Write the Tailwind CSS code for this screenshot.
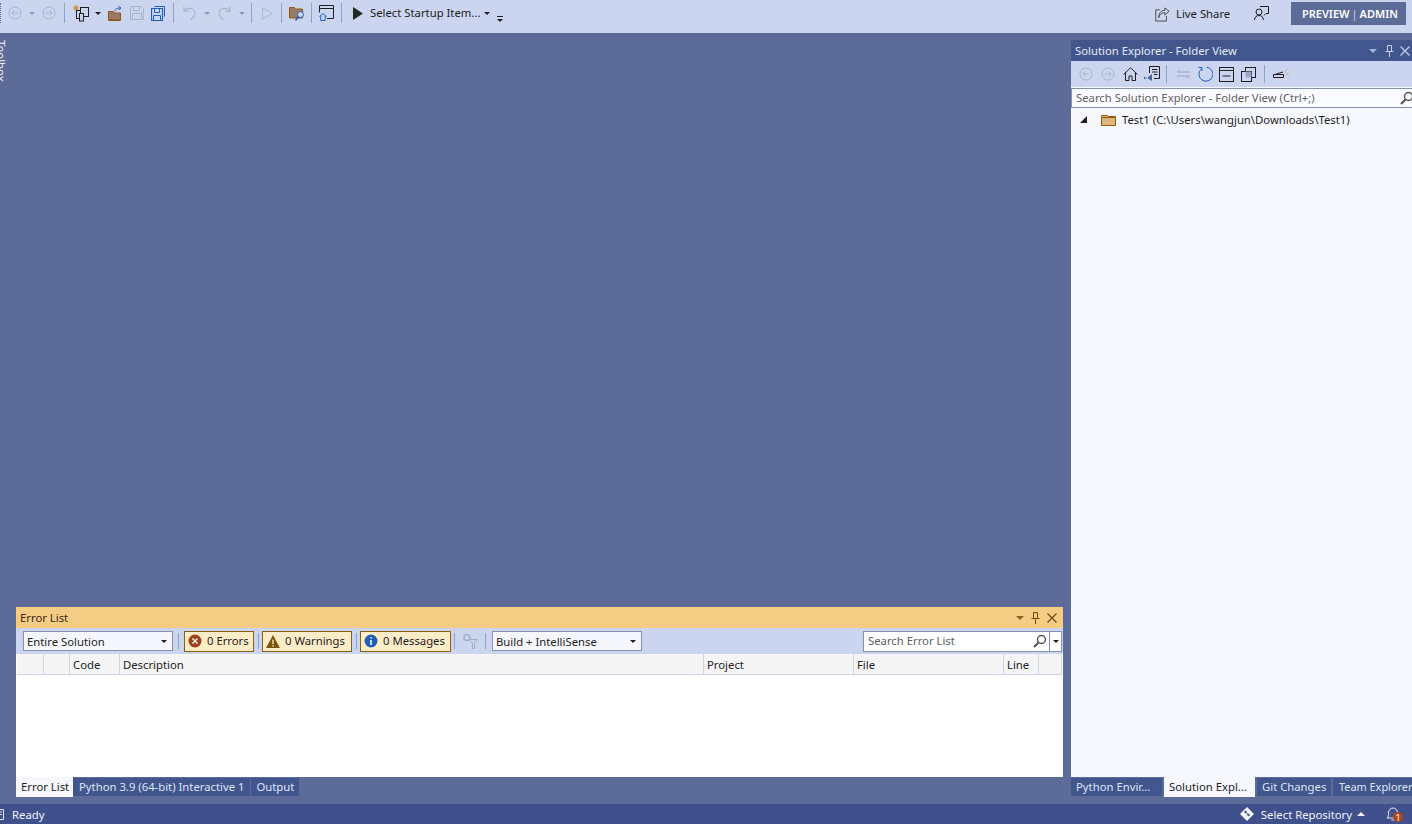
<!DOCTYPE html>
<html lang="en">
<head>
    <meta charset="UTF-8">
    <title>Visual Studio</title>
    <script src="https://cdn.jsdelivr.net/npm/@tailwindcss/browser@4"></script>
</head>
<body class="h-screen w-screen overflow-hidden flex flex-col bg-[#5d6b99] text-[11.3px] leading-none text-[#1e1e1e] font-['Noto_Sans','Open_Sans',sans-serif]">

    <!-- top toolbar -->
    <header class="h-[33px] shrink-0 flex items-center bg-[#ccd5f0]">
        <div class="w-[6px] h-[20px] shrink-0 mb-[7px] border-l border-dotted border-[#5d6b99]"></div>
        <div class="w-[18px] flex justify-center mb-[7px]"><svg width="14" height="14" viewBox="0 0 14 14" fill="none" stroke="#a9b4cc"><circle cx="7" cy="7" r="6"/><path d="M10.5 7H4M6.5 4.2 3.800 7l2.700 2.800"/></svg></div>
        <div class="w-[16px] flex justify-center mb-[7px]"><div class="border-x-[3px] border-x-transparent border-t-[3px] border-t-[#8d97b3]"></div></div>
        <div class="w-[18px] flex justify-center mb-[7px]"><svg width="14" height="14" viewBox="0 0 14 14" fill="none" stroke="#a9b4cc"><circle cx="7" cy="7" r="6"/><path d="M3.500 7H10M7.500 4.200 10.200 7l-2.700 2.800"/></svg></div>
        <div class="w-[12px] flex justify-center mb-[7px]"><div class="w-px h-[20px] bg-[#8fa5c8]"></div></div>
        <div class="w-[22px] flex justify-center mb-[7px]"><svg width="17" height="18" viewBox="0 0 17 18" fill="none"><path d="M3 1v6M0 4h6M1 2l4 4M5 2 1 6" stroke="#c98a1e"/><rect x="3.500" y="6.500" width="7" height="8" stroke="#1e1e1e"/><rect x="7.500" y="3.500" width="8" height="9" fill="#ccd5f0" stroke="#1e1e1e"/><rect x="6.500" y="9.500" width="4" height="7.500" fill="#ccd5f0" stroke="#1e1e1e"/></svg></div>
        <div class="w-[12px] flex justify-center mb-[7px]"><div class="border-x-[3px] border-x-transparent border-t-[3px] border-t-[#1e1e1e]"></div></div>
        <div class="w-[22px] flex justify-center mb-[7px]"><svg width="15" height="15" viewBox="0 0 15 15" fill="none"><path d="M.5 5.500h5l1 1.500h6v7H.5z" fill="#9b7b66" stroke="#8f5a10"/><path d="M.5 14.500h12" stroke="#8f5a10" stroke-width="1.500"/><path d="M7 5c0-2 2-3 5-3M10.500 0 13 2l-2.500 2" stroke="#1f5fb8"/></svg></div>
        <div class="w-[21px] flex justify-center mb-[7px]"><svg width="14" height="14" viewBox="0 0 14 14" fill="none" stroke="#a9b4cc"><path d="M.5.500h11l2 2v11H.5z"/><path d="M3.500.500v4h6v-4M2.500 13.500v-6h9v6"/></svg></div>
        <div class="w-[22px] flex justify-center mb-[7px]"><svg width="14" height="15" viewBox="0 0 14 15" fill="none" stroke="#1f5fb8"><path d="M3.500.500h10v10"/><path d="M.5 2.500h11v12H.5z" stroke-width="1.200"/><path d="M3.500 2.500v4h5v-4M2.500 14.500v-5h7v5"/></svg></div>
        <div class="w-[8px] flex justify-center mb-[7px]"><div class="w-px h-[20px] bg-[#8fa5c8]"></div></div>
        <div class="w-[24px] flex justify-center mb-[7px]"><svg width="13" height="15" viewBox="0 0 13 15" fill="none" stroke="#a9b4cc" stroke-width="1.200"><path d="M1 .500v5h5M1 5.500C3 3 5 2 8 2.500c3 .8 4.500 3.500 3.500 6.500-.5 2-2 3.500-4 5"/></svg></div>
        <div class="w-[12px] flex justify-center mb-[7px]"><div class="border-x-[3px] border-x-transparent border-t-[3px] border-t-[#8d97b3]"></div></div>
        <div class="w-[22px] flex justify-center mb-[7px]"><svg width="13" height="15" viewBox="0 0 13 15" fill="none" stroke="#a9b4cc" stroke-width="1.200"><path d="M12 .500v5H7M12 5.500C10 3 8 2 5 2.500 2 3.300.5 6 1.500 9c.5 2 2 3.500 4 5"/></svg></div>
        <div class="w-[14px] flex justify-center mb-[7px]"><div class="border-x-[3px] border-x-transparent border-t-[3px] border-t-[#8d97b3]"></div></div>
        <div class="w-[4px] flex justify-center mb-[7px]"><div class="w-px h-[20px] bg-[#8fa5c8]"></div></div>
        <div class="w-[28px] flex justify-center mb-[7px] -mr-[2px]"><svg width="11" height="13" viewBox="0 0 11 13" fill="none" stroke="#a9b4cc"><path d="M.5.800 10 6.500.5 12.200z"/></svg></div>
        <div class="w-[4px] flex justify-center mb-[7px]"><div class="w-px h-[20px] bg-[#8fa5c8]"></div></div>
        <div class="w-[26px] pl-[2px] flex justify-center mb-[7px]"><svg width="16" height="15" viewBox="0 0 16 15" fill="none"><path d="M.5 1.500h5l1 1.500h7v9H.5z" fill="#9b7b66" stroke="#8f5a10"/><circle cx="11.500" cy="8.500" r="3" fill="#ccd5f0" stroke="#1f5fb8"/><path d="M9.500 10.500 6.500 14.500" stroke="#1f5fb8" stroke-width="1.500"/></svg></div>
        <div class="w-[4px] flex justify-center mb-[7px]"><div class="w-px h-[20px] bg-[#8fa5c8]"></div></div>
        <div class="w-[26px] flex justify-center mb-[7px]"><svg width="15" height="16" viewBox="0 0 15 16" fill="none"><path d="M8 13.500H14.500V.500H.5v7M.5 3.500h14" stroke="#1e1e1e"/><path d="M.5 11.500 4 8.500l3.500 3M1.800 11v4.500h4.400V11" stroke="#1f5fb8" fill="#ccd5f0"/></svg></div>
        <div class="w-[4px] flex justify-center mb-[7px]"><div class="w-px h-[20px] bg-[#8fa5c8]"></div></div>
        <div class="w-[27px] flex justify-end pr-[7px] mb-[7px]"><svg width="10" height="13" viewBox="0 0 10 13"><path d="M0 0 10 6.500 0 13z" fill="#1e2b22"/></svg></div>
        <span class="w-[108px] whitespace-nowrap mb-[7px]">Select Startup Item...</span>
        <div class="w-[18px] flex justify-center mb-[7px]"><div class="border-x-[3px] border-x-transparent border-t-[3px] border-t-[#1e1e1e]"></div></div>
        <div class="w-[8px] flex flex-col items-center gap-[2px] mt-[4px]"><div class="w-[6px] h-px bg-[#1e1e1e]"></div><div class="border-x-[3px] border-x-transparent border-t-[3px] border-t-[#1e1e1e]"></div></div>

        <div class="ml-auto flex items-center pr-[6px] mb-[7px]">
            <svg class="mt-[3px]" width="15" height="15" viewBox="0 0 16 15" fill="none" stroke="#444"><path d="M5 2.500H.8v12h11.400V9"/><path d="M4 11c.5-3.500 3-5.500 6.500-5.500V8L15 4 10.500.5V3C6 3 4 6.500 4 11z"/></svg>
            <span class="ml-[6px] w-[78px] whitespace-nowrap pt-[2px]">Live Share</span>
            <svg width="15" height="15" viewBox="0 0 15 15" fill="none" stroke="#1e1e1e"><path d="M6 .5h8.500v7H12L10 9.500"/><circle cx="5" cy="6" r="3"/><path d="M.5 14c.3-3 2-4.500 4.500-4.500s4.200 1.500 4.500 4.500"/></svg>
            <div class="ml-[22px] w-[115px] h-[23px] pl-[3px] bg-[#5d6b99] flex items-center justify-center text-white text-[11px] font-semibold whitespace-nowrap">PREVIEW<span class="mx-[2px] font-normal text-[#ccd5f0]">|</span>ADMIN</div>
        </div>
    </header>

    <div class="flex-1 min-h-0 flex">
        <!-- toolbox strip -->
        <div class="w-[16px] shrink-0 overflow-hidden pt-[7px]">
            <div class="text-white/90 whitespace-nowrap origin-top-left rotate-90 translate-x-[7px] h-[14px]">Toolbox</div>
        </div>

        <!-- document well + error list -->
        <div class="w-[1047px] shrink-0 flex flex-col">
            <div class="flex-1"></div>
            <section class="h-[170px] flex flex-col bg-white">
                <div class="h-[21px] shrink-0 flex items-center bg-[#f5cc84] pl-[4px] pr-[6px] text-[#3b2a12]">
                    <span>Error List</span>
                    <div class="ml-auto flex items-center gap-[7px]">
                        <div class="border-x-[4px] border-x-transparent border-t-[4px] border-t-[#8a6420]"></div>
                        <svg width="9" height="12" viewBox="0 0 9 12" fill="none" stroke="#6b4d14"><path d="M2.500.5h4v6h-4zM.5 6.500h8M4.500 6.500V12"/></svg>
                        <svg width="10" height="10" viewBox="0 0 10 10" stroke="#6b4d14" stroke-width="1.200"><path d="m.5.500 9 9M9.500.500l-9 9"/></svg>
                    </div>
                </div>
                <div class="h-[26px] shrink-0 flex items-center bg-[#ccd5f0] pl-[7px]">
                    <div class="w-[150px] h-[20px] flex items-center justify-between px-[3px] bg-[#f5f7fd] border border-[#8591b3]"><span class="pt-[1px]">Entire Solution</span><div class="mr-[2px] border-x-[3px] border-x-transparent border-t-[3px] border-t-[#1e1e1e]"></div></div>
                    <div class="w-px h-[16px] bg-[#8fa5c8] mx-[5px]"></div>
                    <div class="w-[70px] h-[21px] flex items-center pl-[3px] gap-[5px] bg-[#fdecc8] border border-[#8f5f10]"><svg width="14" height="14" viewBox="0 0 14 14"><circle cx="7" cy="7" r="6.500" fill="#a1401a"/><path d="m4.500 4.500 5 5m0-5-5 5" stroke="#fff" stroke-width="1.400"/></svg><span>0 Errors</span></div>
                    <div class="w-px h-[16px] bg-[#8fa5c8] ml-[4px] mr-[3px]"></div>
                    <div class="w-[90px] h-[21px] flex items-center pl-[3px] gap-[5px] bg-[#fdecc8] border border-[#8f5f10]"><svg width="14" height="13" viewBox="0 0 14 13"><path d="M7 0 14 13H0z" fill="#7c5606"/><path d="M7 4.500V9M7 10v1.500" stroke="#fdecc8" stroke-width="1.300"/></svg><span>0 Warnings</span></div>
                    <div class="w-px h-[16px] bg-[#8fa5c8] ml-[4px] mr-[3px]"></div>
                    <div class="w-[91px] h-[21px] flex items-center pl-[3px] gap-[5px] bg-[#fdecc8] border border-[#8f5f10]"><svg width="14" height="14" viewBox="0 0 14 14"><circle cx="7" cy="7" r="6.500" fill="#1f5fb8"/><path d="M7 6v5M7 3v1.600" stroke="#fff" stroke-width="1.500"/></svg><span>0 Messages</span></div>
                    <div class="w-px h-[16px] bg-[#8fa5c8] ml-[3px]"></div>
                    <div class="w-[30px] flex justify-center"><svg width="15" height="15" viewBox="0 0 15 15" fill="none" stroke="#a3aec6"><circle cx="4" cy="3.500" r="3" stroke-width="1.500"/><path d="M6 5.500h8.500l-3 4v5h-2v-5z"/></svg></div>
                    <div class="w-px h-[16px] bg-[#8fa5c8] mr-[6px]"></div>
                    <div class="w-[150px] h-[20px] flex items-center justify-between px-[3px] bg-[#f5f7fd] border border-[#8591b3]"><span class="whitespace-nowrap pt-[1px]">Build + IntelliSense</span><div class="mr-[2px] border-x-[3px] border-x-transparent border-t-[3px] border-t-[#1e1e1e]"></div></div>
                    <div class="ml-auto mr-[1px] w-[199px] h-[21px] flex items-center bg-white border border-[#8591b3]">
                        <span class="flex-1 pl-[4px] text-[#5f5f5f]">Search Error List</span>
                        <svg class="mr-[1px]" width="14" height="14" viewBox="0 0 14 14" fill="none" stroke="#555"><circle cx="8.500" cy="5.500" r="4" stroke-width="1.500"/><path d="M5.500 8.500 1 13" stroke-width="2.200"/></svg>
                        <div class="w-[12px] h-full ml-[1px] flex items-center justify-center border-l border-[#8591b3]"><div class="border-x-[3px] border-x-transparent border-t-[3px] border-t-[#1e1e1e]"></div></div>
                    </div>
                </div>
                <div class="h-[21px] shrink-0 flex items-stretch bg-[#f5f5f5] border-b border-[#d0d4e4] ml-[1px] mr-[1px] text-[#222]">
                    <div class="w-[27px] border-r border-[#d0d4e4]"></div>
                    <div class="w-[26px] border-r border-[#d0d4e4]"></div>
                    <div class="w-[50px] pl-[3px] pt-[1px] flex items-center border-r border-[#d0d4e4]">Code</div>
                    <div class="w-[584px] pl-[3px] pt-[1px] flex items-center border-r border-[#d0d4e4]">Description</div>
                    <div class="w-[150px] pl-[3px] pt-[1px] flex items-center border-r border-[#d0d4e4]">Project</div>
                    <div class="w-[150px] pl-[3px] pt-[1px] flex items-center border-r border-[#d0d4e4]">File</div>
                    <div class="w-[35px] pl-[3px] pt-[1px] flex items-center border-r border-[#d0d4e4]">Line</div>
                    <div class="w-[23px] border-r border-[#d0d4e4]"></div>
                </div>
                <div class="flex-1"></div>
            </section>
            <nav class="h-[27px] shrink-0 flex items-start gap-[2px] text-[#dfe5f5]">
                <div class="w-[57px] h-[20px] pl-[5px] flex items-center bg-[#f5f7fd] text-[#1e1e1e] whitespace-nowrap">Error List</div>
                <div class="h-[18px] mt-[1px] -ml-[2px] px-[6px] flex items-center bg-[#40568d] whitespace-nowrap">Python 3.9 (64-bit) Interactive 1</div>
                <div class="h-[18px] mt-[1px] -ml-[1px] px-[5px] flex items-center bg-[#40568d] whitespace-nowrap">Output</div>
            </nav>
        </div>

        <!-- solution explorer -->
        <div class="ml-[8px] flex-1 min-w-0 flex flex-col pt-[7px]">
            <section class="flex-1 min-h-0 flex flex-col bg-[#f6f8fe]">
                <div class="h-[21px] shrink-0 flex items-center bg-[#40568d] pl-[4px] pr-[2px] text-[#e6ebf8]">
                    <span>Solution Explorer - Folder View</span>
                    <div class="ml-auto flex items-center gap-[7px]">
                        <div class="border-x-[4px] border-x-transparent border-t-[4px] border-t-[#a8b4d8]"></div>
                        <svg class="ml-[1px] mr-[-1px]" width="9" height="12" viewBox="0 0 9 12" fill="none" stroke="#c4cee8"><path d="M2.500.5h4v6h-4zM.5 6.500h8M4.500 6.500V12"/></svg>
                        <svg width="10" height="10" viewBox="0 0 10 10" stroke="#c4cee8" stroke-width="1.200"><path d="m.5.500 9 9M9.500.500l-9 9"/></svg>
                    </div>
                </div>
                <div class="h-[26px] shrink-0 flex items-center bg-[#ccd5f0] pl-[4px]">
                    <div class="w-[22px] flex justify-center"><svg width="14" height="14" viewBox="0 0 14 14" fill="none" stroke="#a9b4cc"><circle cx="7" cy="7" r="6"/><path d="M10.500 7H4M6.500 4.200 3.800 7l2.700 2.800"/></svg></div>
                    <div class="w-[22px] flex justify-center"><svg width="14" height="14" viewBox="0 0 14 14" fill="none" stroke="#a9b4cc"><circle cx="7" cy="7" r="6"/><path d="M3.500 7H10M7.500 4.200 10.200 7l-2.700 2.800"/></svg></div>
                    <div class="w-[22px] flex justify-center"><svg width="15" height="14" viewBox="0 0 15 14" fill="none" stroke="#1e1e1e"><path d="M.5 7.500 7.500.8l7 6.700M2.500 6v7.500h3.500V9h3v4.500h3.500V6"/></svg></div>
                    <div class="w-[20px] flex justify-center"><svg width="17" height="16" viewBox="0 0 17 16" fill="none"><path d="M6.500 7V.5h10v12H11" stroke="#1e1e1e"/><path d="M9 3.500h5.500M9 6h5.500M11 8.500h3.500" stroke="#1e1e1e"/><path d="M1 10.500 3.500 12.500 9 8v7l-5.500-3.500L1 13.500z" fill="#4a63a8"/></svg></div>
                    <div class="w-[10px] flex justify-center"><div class="w-px h-[18px] bg-[#8fa5c8]"></div></div>
                    <div class="w-[24px] flex justify-center"><svg width="15" height="10" viewBox="0 0 15 10" fill="none" stroke="#9aa6c2"><path d="M14 3H1.500L4 .5M1 7h12.500L11 9.500"/></svg></div>
                    <div class="w-[19px] flex justify-center"><svg width="16" height="16" viewBox="0 0 16 16" fill="none" stroke="#1f5fb8"><path d="M4.500 2.800A7 7 0 1 0 9.500 1.200M1.500 1.500h3.500V5"/></svg></div>
                    <div class="w-[24px] flex justify-center"><svg width="15" height="15" viewBox="0 0 15 15" fill="none" stroke="#1e1e1e"><rect x=".5" y=".5" width="14" height="14"/><path d="M.5 3.500h14M3.500 9h8"/></svg></div>
                    <div class="w-[20px] flex justify-center"><svg width="15" height="15" viewBox="0 0 15 15" fill="none" stroke="#1e1e1e"><rect x="4.500" y=".5" width="10" height="10"/><rect x=".5" y="4.500" width="10" height="10" fill="#ccd5f0"/><path d="M4.500 4.500h6v6h-6z" fill="#9aa6c2" stroke="none"/></svg></div>
                    <div class="w-[12px] flex justify-center"><div class="w-px h-[18px] bg-[#8fa5c8]"></div></div>
                    <div class="w-[22px] flex justify-center"><svg width="16" height="10" viewBox="0 0 16 10" fill="none"><path d="M.5 5.500h10v3H.5zM3 5l7-2" stroke="#1e1e1e"/><path d="M12 3h1M14 .5l-1 1M14 5h1.500" stroke="#c98a1e"/></svg></div>
                </div>
                <div class="h-[20px] shrink-0 flex items-center mt-[1px] bg-[#fbfcff] border border-[#8591b3] border-r-0 pl-[4px] text-[#5f5f5f]">
                    <span class="flex-1 whitespace-nowrap">Search Solution Explorer - Folder View (Ctrl+;)</span>
                    <svg class="shrink-0" width="12" height="14" viewBox="0 0 12 14" fill="none" stroke="#555"><circle cx="8.500" cy="5.500" r="4" stroke-width="1.500"/><path d="M5.500 8.500 1 13" stroke-width="2.200"/></svg>
                </div>
                <div class="h-[24px] shrink-0 flex items-center">
                    <div class="ml-[9px] w-[21px]"><svg width="8" height="8" viewBox="0 0 8 8"><path d="M7 0v7H0z" fill="#1e1e1e"/></svg></div>
                    <svg class="shrink-0" width="15" height="11" viewBox="0 0 15 11"><path d="M.5 1.500V.5h6l1 1h7v9H.5z" fill="#dcb67a" stroke="#8f5a10"/><path d="M.5 2.500h14" stroke="#8f5a10"/></svg>
                    <span class="ml-[6px] whitespace-nowrap">Test1 (C:\Users\wangjun\Downloads\Test1)</span>
                </div>
                <div class="flex-1"></div>
            </section>
            <nav class="h-[27px] shrink-0 flex items-start gap-[2px] text-[#dfe5f5]">
                <div class="w-[91px] shrink-0 h-[18px] mt-[1px] pl-[5px] flex items-center bg-[#40568d] whitespace-nowrap overflow-hidden">Python Envir...</div>
                <div class="w-[91px] shrink-0 h-[20px] pl-[5px] flex items-center bg-[#f5f7fd] text-[#1e1e1e] whitespace-nowrap overflow-hidden">Solution Expl...</div>
                <div class="w-[74px] shrink-0 h-[18px] mt-[1px] pl-[5px] flex items-center bg-[#40568d] whitespace-nowrap overflow-hidden">Git Changes</div>
                <div class="w-[79px] shrink-0 h-[18px] mt-[1px] pl-[6px] flex items-center bg-[#40568d] text-[10.9px] whitespace-nowrap">Team Explorer</div>
            </nav>
        </div>
    </div>

    <!-- status bar -->
    <footer class="h-[20px] shrink-0 flex items-center bg-[#40508d] text-[#f0f3fb]">
        <svg class="shrink-0 -ml-[1px]" width="5" height="11" viewBox="0 0 5 11" fill="none" stroke="#dfe5f5"><path d="M0 .5h4.500v10H0M0 3h3M0 5.500h3"/></svg>
        <span class="ml-[8px] pt-[2px]">Ready</span>
        <div class="ml-auto flex items-center">
            <svg width="14" height="14" viewBox="0 0 14 14"><path d="M7 0 14 7 7 14 0 7z" fill="#f5f7fd"/><circle cx="5.500" cy="5" r="1.200" fill="#40508d"/><circle cx="8.500" cy="8" r="1.200" fill="#40508d"/><path d="m5.500 5 3 3" stroke="#40508d"/></svg>
            <span class="ml-[7px] pt-[2px]">Select Repository</span>
            <div class="ml-[5px] border-x-[4px] border-x-transparent border-b-[4px] border-b-[#f0f3fb]"></div>
            <div class="relative ml-[21px] mr-[10px] w-[16px] h-[16px]">
                <svg width="14" height="15" viewBox="0 0 14 15" fill="none" stroke="#e6ebf8"><path d="M1 12c1.500-1 1.500-3 1.500-5 0-3 2-5 4.500-5s4.500 2 4.500 5c0 2 0 4 1.500 5zM5.500 14h3"/></svg>
                <div class="absolute -right-[1px] bottom-0 w-[10px] h-[10px] rounded-full bg-[#b0461a] text-white text-[9px] flex items-center justify-center">1</div>
            </div>
        </div>
    </footer>
</body>
</html>
